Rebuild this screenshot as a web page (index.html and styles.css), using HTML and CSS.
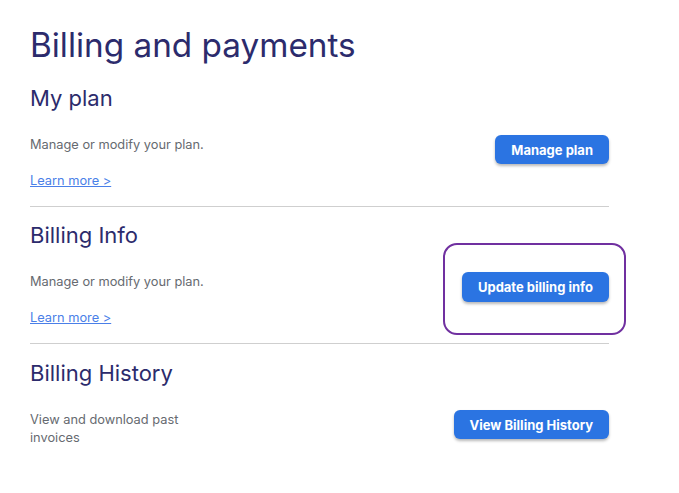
FILE: index.html
```html
<!DOCTYPE html>
<html lang="en">
<head>
<meta charset="utf-8">
<title>Billing and payments</title>
<link rel="stylesheet" href="styles.css">
</head>
<body>
<main class="page">
  <h1 class="title">Billing and payments</h1>

  <section class="section">
    <h2 class="heading">My plan</h2>
    <div class="row">
      <div class="info">
        <p class="desc">Manage or modify your plan.</p>
        <a class="link" href="#">Learn more &gt;</a>
      </div>
      <button class="btn" type="button">Manage plan</button>
    </div>
  </section>

  <section class="section">
    <h2 class="heading">Billing Info</h2>
    <div class="row">
      <div class="info">
        <p class="desc">Manage or modify your plan.</p>
        <a class="link" href="#">Learn more &gt;</a>
      </div>
      <div class="btn-wrap">
        <span class="highlight"></span>
        <button class="btn" type="button">Update billing info</button>
      </div>
    </div>
  </section>

  <section class="section last">
    <h2 class="heading">Billing History</h2>
    <div class="row">
      <div class="info narrow">
        <p class="desc">View and download past invoices</p>
      </div>
      <button class="btn" type="button">View Billing History</button>
    </div>
  </section>
</main>
</body>
</html>
```

FILE: styles.css
```css
* { box-sizing: border-box; }

body {
  margin: 0;
  background: #ffffff;
  font-family: Inter, "Noto Sans", "Liberation Sans", sans-serif;
}

.page {
  width: 609px;
  padding: 25px 0 0 30px;
}

.title {
  margin: 0 0 4px;
  font-size: 33.3px;
  line-height: 41px;
  font-weight: 400;
  color: #2c2b6c;
}

.section {
  padding: 15px 0 16px;
  border-bottom: 1px solid #cfcfcf;
}

.section.last {
  padding-top: 16px;
  border-bottom: none;
}

.heading {
  margin: 0 0 24px;
  font-size: 22px;
  line-height: 27px;
  font-weight: 400;
  color: #2c2b6c;
}

.row {
  display: flex;
  justify-content: space-between;
  align-items: flex-start;
}

.info {
  display: flex;
  flex-direction: column;
  align-items: flex-start;
}

.narrow {
  width: 185px;
}

.desc {
  margin: 0;
  font-size: 12.8px;
  line-height: 18px;
  color: #666a70;
}

.link {
  margin-top: 18px;
  font-size: 12.8px;
  line-height: 18px;
  color: #4a7fe8;
  text-decoration: underline;
}

.btn {
  height: 29px;
  margin-top: -1px;
  padding: 0 16px;
  border: none;
  border-radius: 6px;
  background: #2b74e2;
  color: #ffffff;
  font-family: Inter, "Liberation Sans", sans-serif;
  font-size: 13px;
  font-weight: 700;
  box-shadow: 0 2px 3px rgba(0, 0, 0, 0.28);
  cursor: pointer;
}

.btn-wrap {
  position: relative;
  display: flex;
}

.btn-wrap .btn {
  height: 30px;
}

.highlight {
  position: absolute;
  top: -30px;
  left: -19px;
  right: -17px;
  bottom: -33px;
  border: 2px solid #7030a0;
  border-radius: 14px;
  pointer-events: none;
}
```
